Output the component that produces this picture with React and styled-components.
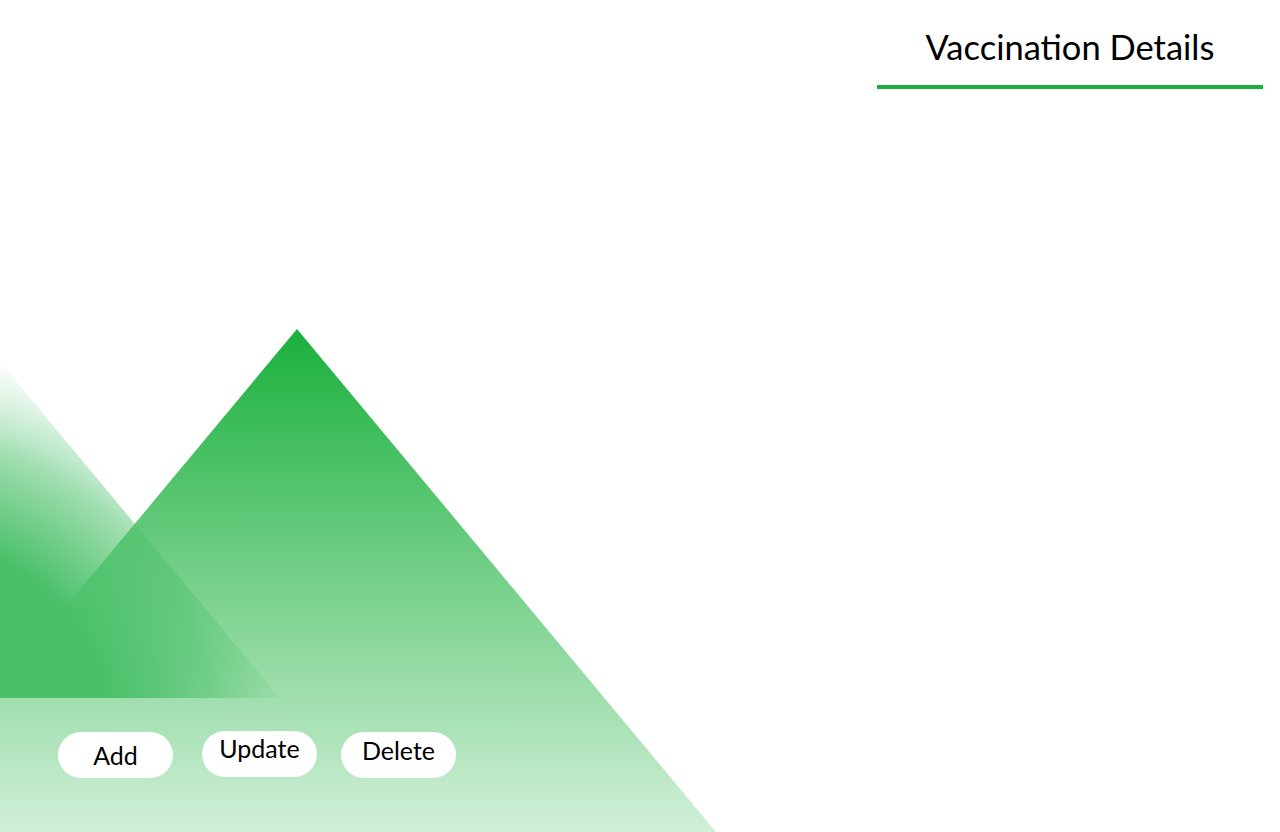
import React from 'react';
import styled, { createGlobalStyle } from 'styled-components';

const GlobalStyle = createGlobalStyle`
    html, body {
        margin: 0;
        padding: 0;
        background: #ffffff;
        font-family: Lato, "Noto Sans", sans-serif;
    }
`;

export default function App() {

    const actions = [
        { label: 'Add', space: 0, lift: 0, raise: 0 },
        { label: 'Update', space: 29, lift: 1, raise: 12 },
        { label: 'Delete', space: 24, lift: 0, raise: 11 },
    ];

    return (
        <Root>
            <GlobalStyle/>
            <FrontTriangle/>
            <BackTriangle/>
            <Header>
                <TitleBlock>
                    <Title>Vaccination Details</Title>
                    <Underline/>
                </TitleBlock>
            </Header>
            <Actions>
                {actions.map(a => (
                    <ActionButton key={a.label} $space={a.space} $lift={a.lift} $raise={a.raise}>
                        {a.label}
                    </ActionButton>
                ))}
            </Actions>
        </Root>
    )
}

const Root = styled.div`
    position: relative;
    display: flex;
    flex-direction: column;
    width: 1280px;
    height: 832px;
    overflow: hidden;
    background-color: white;
`;

const FrontTriangle = styled.div`
    position: absolute;
    left: -122px;
    top: 329px;
    width: 838px;
    height: 503px;
    clip-path: polygon(50% 0, 100% 100%, 0 100%);
    background: linear-gradient(to bottom, rgba(26, 176, 60, 1) 0%, rgba(26, 176, 60, 0.2) 100%);
`;

const BackTriangle = styled.div`
    position: absolute;
    left: -558px;
    top: 195px;
    width: 838px;
    height: 503px;
    clip-path: polygon(50% 0, 100% 100%, 0 100%);
    background: radial-gradient(circle at 458px 555px,
        rgba(74, 192, 105, 1) 0px,
        rgba(74, 192, 105, 1) 215px,
        rgba(74, 192, 105, 0.74) 270px,
        rgba(74, 192, 105, 0.51) 316px,
        rgba(74, 192, 105, 0.38) 332px,
        rgba(74, 192, 105, 0.18) 365px,
        rgba(74, 192, 105, 0) 402px);
`;

const Header = styled.div`
    position: relative;
    z-index: 2;
    display: flex;
    justify-content: flex-end;
    padding-right: 17px;
    padding-top: 25px;
`;

const TitleBlock = styled.div`
    display: flex;
    flex-direction: column;
    align-items: center;
    width: 386px;
`;

const Title = styled.h1`
    margin: 0;
    font-size: 34.5px;
    font-weight: 400;
    line-height: 44px;
    color: #000;
`;

const Underline = styled.div`
    width: 100%;
    height: 4px;
    margin-top: 16px;
    background-color: #1ab03c;
`;

const Actions = styled.div`
    position: relative;
    z-index: 2;
    display: flex;
    align-items: flex-end;
    margin-top: auto;
    margin-left: 58px;
    padding-bottom: 54px;
`;

const ActionButton = styled.button`
    width: 115px;
    height: 46px;
    margin-left: ${props => props.$space}px;
    margin-bottom: ${props => props.$lift}px;
    padding: 0 0 ${props => props.$raise}px;
    border: none;
    border-radius: 23px;
    background-color: white;
    color: #000;
    font-family: Lato, "Noto Sans", sans-serif;
    font-size: 25px;
    line-height: 30px;
    cursor: pointer;
`;
